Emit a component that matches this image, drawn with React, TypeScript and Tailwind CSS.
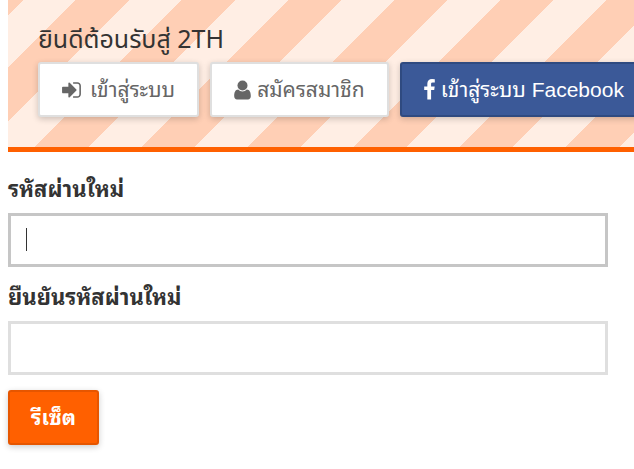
import { useState } from "react";
import type { ReactNode } from "react";

var BTN = "flex h-[55px] shrink-0 items-center whitespace-nowrap rounded-[3px] border-2 text-[21px] leading-[24px] shadow-[0_2px_6px_rgba(0,0,0,0.2)] cursor-pointer";

function SignInIcon() {
  return (
    <svg viewBox="0 0 1536 1792" className="h-[22px] w-[19px]" fill="currentColor" aria-hidden="true">
      <path d="M1184 896q0 26-19 45l-544 544q-19 19-45 19t-45-19-19-45v-288h-448q-26 0-45-19t-19-45v-384q0-26 19-45t45-19h448v-288q0-26 19-45t45-19 45 19l544 544q19 19 19 45zm352-352v704q0 119-84.5 203.5t-203.5 84.5h-320q-13 0-22.5-9.5t-9.5-22.5q0-4-1-20t-.5-26.5 3-23.5 10-19.5 20.5-6.5h320q66 0 113-47t47-113v-704q0-66-47-113t-113-47h-312l-11.5-1-11.5-3-8-5.5-7-9-2-13.5q0-4-1-20t-.5-26.5 3-23.5 10-19.5 20.5-6.5h320q119 0 203.5 84.5t84.5 203.5z" />
    </svg>
  );
}

function UserIcon() {
  return (
    <svg viewBox="0 0 17 20" className="h-5 w-[17px]" fill="currentColor" aria-hidden="true">
      <circle cx="8.5" cy="5.5" r="5" />
      <path d="M4.2 9.6C5.3 10.8 6.8 11.5 8.5 11.5S11.7 10.8 12.8 9.6C15.6 9.6 16.8 12.4 16.8 16.2C16.8 18.2 15.6 19.4 14 19.4H3C1.4 19.4 0.2 18.2 0.2 16.2C0.2 12.4 1.4 9.6 4.2 9.6Z" />
    </svg>
  );
}

function FacebookIcon() {
  return (
    <svg viewBox="479 0 864 1792" className="h-[22px] w-[11px]" fill="currentColor" aria-hidden="true">
      <path d="M1343 12v264h-157q-86 0-116 36t-30 108v189h293l-39 296h-254v759h-306v-759h-255v-296h255v-218q0-186 104-288.5t277-102.5q147 0 228 12z" />
    </svg>
  );
}

function Field({ id, label, value, onChange, autoFocus, children }: {
  id: string; label: string; value: string; onChange: (v: string) => void; autoFocus?: boolean; children?: ReactNode;
}) {
  return (
    <div className="mb-[15px]">
      <label htmlFor={id} className="mb-[7px] block text-[22px] font-bold leading-[32px]">{label}</label>
      <div className="relative">
        <input
          id={id}
          type="password"
          value={value}
          autoFocus={autoFocus}
          onChange={function (e) { onChange(e.target.value); }}
          className="peer block h-[54px] w-full border-[3px] border-[#dfdfdf] bg-white px-[15px] text-[20px] caret-transparent outline-none focus:border-[#c6c6c6]"
        />
        {children}
      </div>
    </div>
  );
}

export default function App() {
  var [password, setPassword] = useState("");
  var [confirm, setConfirm]   = useState("");

  return (
    <div className="min-h-screen overflow-hidden bg-white pl-2 font-['Liberation_Sans','Noto_Sans_Thai_Looped','Loma','Waree','Garuda','Umpush',sans-serif] text-[#333]">
      {/* Welcome bar */}
      <header className="overflow-hidden border-b-[5px] border-[#ff6000] bg-[repeating-linear-gradient(135deg,#ffcfb5_0px,#ffcfb5_11px,#ffeee4_11px,#ffeee4_48px,#ffcfb5_48px,#ffcfb5_75px)] pb-[30px] pl-[30px] pt-[23px]">
        <h1 className="mb-[9px] font-['Noto_Sans','Noto_Sans_Thai',sans-serif] text-[25px] leading-[30px]">ยินดีต้อนรับสู่ 2TH</h1>
        <nav className="flex gap-[11px]">
          <button type="button" className={BTN + " gap-[9px] border-[#dfdfdf] bg-white px-[22px] text-[#666]"}>
            <SignInIcon />
            เข้าสู่ระบบ
          </button>
          <button type="button" className={BTN + " gap-[6px] border-[#dfdfdf] bg-white px-[22px] text-[#666]"}>
            <UserIcon />
            สมัครสมาชิก
          </button>
          <button type="button" className={BTN + " gap-[6px] border-[#2f4a80] bg-[#3b5998] px-[22px] text-white"}>
            <FacebookIcon />
            เข้าสู่ระบบ Facebook
          </button>
        </nav>
      </header>

      <form className="max-w-[600px] pt-[22px]" onSubmit={function (e) { e.preventDefault(); }}>
        <Field id="password" label="รหัสผ่านใหม่" value={password} onChange={setPassword} autoFocus>
          {/* thin caret while the box is empty */}
          {password === "" && (
            <span className="pointer-events-none absolute left-[18px] top-[15px] h-[23px] w-px bg-[#333] opacity-0 peer-focus:opacity-100" />
          )}
        </Field>
        <Field id="confirm" label="ยืนยันรหัสผ่านใหม่" value={confirm} onChange={setConfirm} />
        <button type="submit" className={BTN + " border-[#e65600] bg-[#ff6000] px-[21px] font-bold text-white"}>
          รีเซ็ต
        </button>
      </form>
    </div>
  );
}
